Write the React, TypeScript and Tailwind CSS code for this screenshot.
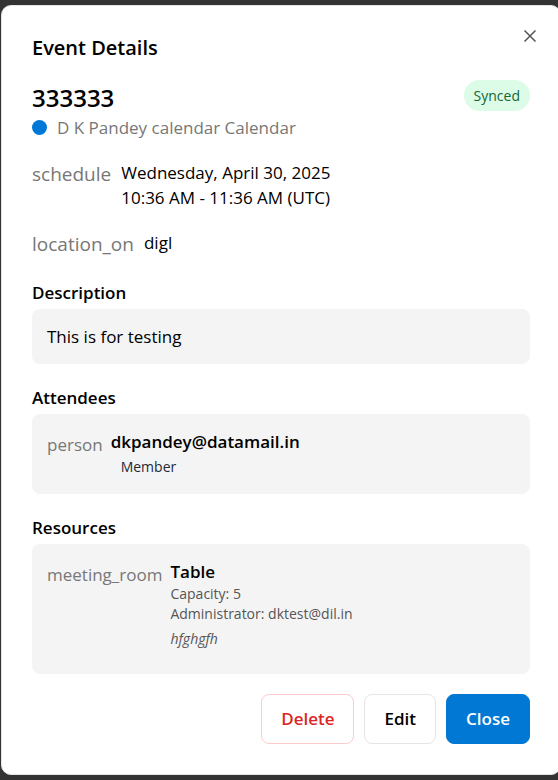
import type { ReactNode } from "react";

function Section({ title, children }: { title: string; children: ReactNode }) {
  return (
    <section className="mt-5">
      <h4 className="mb-[3px] text-[17px] leading-[27px] font-semibold">{title}</h4>
      <div className="rounded-lg bg-[#f4f4f4] p-[15px]">{children}</div>
    </section>
  );
}

export default function App() {
  return (
    <main className="overflow-hidden bg-[#333333] pt-[5px] pb-[5px] pl-px font-['Open_Sans','Noto_Sans',sans-serif] text-black">
      <div
        role="dialog"
        aria-labelledby="dialog-title"
        className="relative -mr-[3px] rounded-[10px] border border-[#e5e5e5] bg-white p-[30px]"
      >
        <button
          type="button"
          aria-label="Close dialog"
          className="absolute top-5 right-5 flex size-5 items-center justify-center text-[#555555]"
        >
          <svg width="14" height="14" viewBox="0 0 14 14" fill="none" stroke="currentColor" strokeWidth="1.5" aria-hidden="true">
            <path d="M1.5 1.5 12.5 12.5M12.5 1.5 1.5 12.5" />
          </svg>
        </button>

        <h2 id="dialog-title" className="text-[20px] leading-6 font-semibold">
          Event Details
        </h2>

        <div className="mt-5 flex items-start justify-between">
          <div>
            <h3 className="text-[24px] leading-[35px] font-semibold">333333</h3>
            <p className="flex items-center gap-[10px] text-[17px] leading-[25px] text-[#777777]">
              <span className="size-[15px] rounded-full bg-[#0078d7]" />
              D K Pandey calendar Calendar
            </p>
          </div>
          <span className="rounded-full bg-[#dcfce7] px-[10px] text-[14px] leading-[31px] text-[#166534]">Synced</span>
        </div>

        <div className="mt-5 flex items-start gap-[10px]">
          <span className="text-[19px] leading-[29px] text-[#777777]">schedule</span>
          <div className="text-[17px] leading-[25px]">
            <p>Wednesday, April 30, 2025</p>
            <p>10:36 AM - 11:36 AM (UTC)</p>
          </div>
        </div>

        <div className="mt-5 flex items-start gap-[10px]">
          <span className="text-[19px] leading-[29px] text-[#777777]">location_on</span>
          <p className="text-[17px] leading-[25px]">digl</p>
        </div>

        <Section title="Description">
          <p className="text-[17px] leading-[25px]">This is for testing</p>
        </Section>

        <Section title="Attendees">
          <div className="flex items-start gap-2">
            <span className="text-[17px] leading-[31px] text-[#777777]">person</span>
            <div>
              <p className="text-[17px] leading-[25px] font-semibold">dkpandey@datamail.in</p>
              <span className="block w-fit rounded-full bg-[#f3f4f6] px-[10px] text-[14px] leading-[25px] text-[#1f2937]">
                Member
              </span>
            </div>
          </div>
        </Section>

        <Section title="Resources">
          <div className="flex items-start gap-2 pb-[10px]">
            <span className="text-[17px] leading-[31px] text-[#777777]">meeting_room</span>
            <div className="text-[14px] leading-5 text-[#555555]">
              <p className="text-[17px] leading-[25px] font-semibold text-black">Table</p>
              <p>Capacity: 5</p>
              <p>Administrator: dktest@dil.in</p>
              <p className="mt-[5px] italic">hfghgfh</p>
            </div>
          </div>
        </Section>

        <div className="mt-5 flex justify-end gap-[10px] text-[17px] leading-6 font-semibold">
          <button type="button" className="rounded-lg border border-[#fecaca] px-[19px] py-3 text-[#dc2626]">Delete</button>
          <button type="button" className="rounded-lg border border-[#e5e5e5] px-[19px] py-3">Edit</button>
          <button type="button" className="rounded-lg border border-[#0078d4] bg-[#0078d4] px-[19px] py-3 text-white">Close</button>
        </div>
      </div>
    </main>
  );
}
